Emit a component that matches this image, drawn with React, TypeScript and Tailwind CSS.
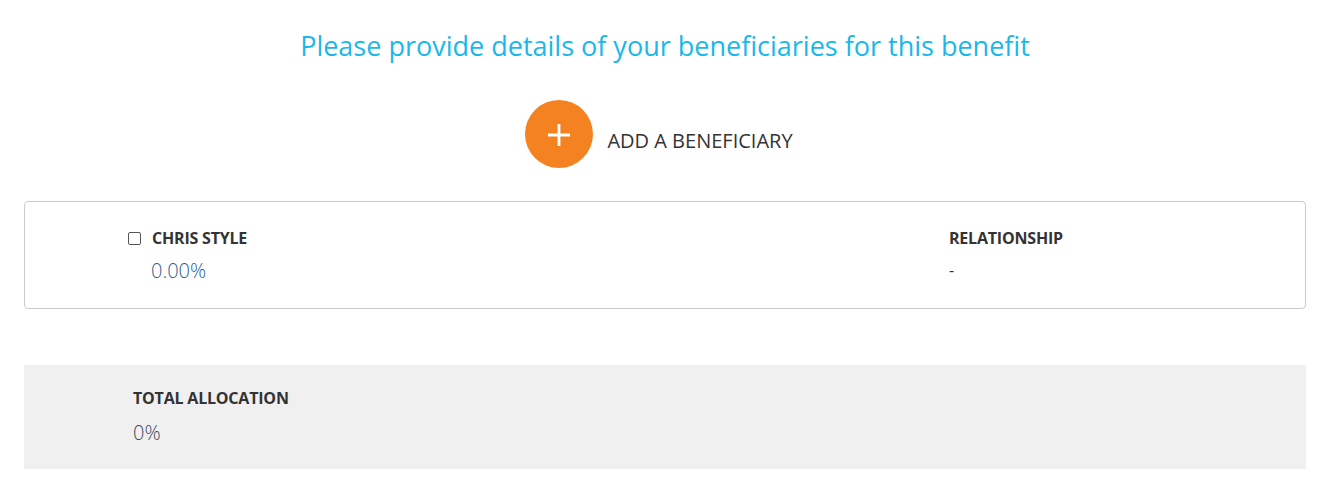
export default function App() {
  return (
    <div className="h-[478px] w-full bg-white pl-[24px] pr-[20px] font-['Open_Sans',sans-serif]">
      <h1 className="pt-[28px] text-center text-[27px] leading-[36px] font-normal text-[#1ab8ea]">
        Please provide details of your beneficiaries for this benefit
      </h1>
      <div className="mt-[36px] flex items-start justify-center pr-[12px]">
        <button className="flex h-[68px] w-[68px] items-center justify-center rounded-full bg-[#f58220] text-white">
          <svg width="22" height="22" viewBox="0 0 22 22" className="mt-[2px]">
            <path d="M11 0v22M0 11h22" stroke="white" strokeWidth="2.8" />
          </svg>
        </button>
        <span className="ml-[14px] mt-[27px] text-[20px] leading-[28px] text-[#333]">ADD A BENEFICIARY</span>
      </div>
      <div className="mt-[33px] flex h-[108px] rounded-[4px] border border-[#cccccc] pt-[25px]">
        <div className="w-[924px] pl-[103px]">
          <div className="flex items-center">
            <span className="h-[13px] w-[13px] rounded-[2px] border border-[#555]" />
            <span className="ml-[11px] text-[16px] font-bold tracking-[-0.2px] leading-[22px] text-[#333]">CHRIS STYLE</span>
          </div>
          <div className="ml-[23px] mt-[8px] text-[20px] font-light leading-[28px] text-[#2c5f94]">0.00%</div>
        </div>
        <div>
          <div className="text-[16px] font-bold tracking-[-0.2px] leading-[22px] text-[#333]">RELATIONSHIP</div>
          <div className="mt-[10px] text-[16px] leading-[22px] text-[#333]">-</div>
        </div>
      </div>
      <div className="mt-[56px] h-[104px] bg-[#f0f0f0] pl-[109px] pt-[22px]">
        <div className="text-[16px] font-bold tracking-[-0.2px] leading-[22px] text-[#333]">TOTAL ALLOCATION</div>
        <div className="mt-[10px] text-[20px] font-light leading-[28px] text-[#3c4c5e]">0%</div>
      </div>
    </div>
  );
}
